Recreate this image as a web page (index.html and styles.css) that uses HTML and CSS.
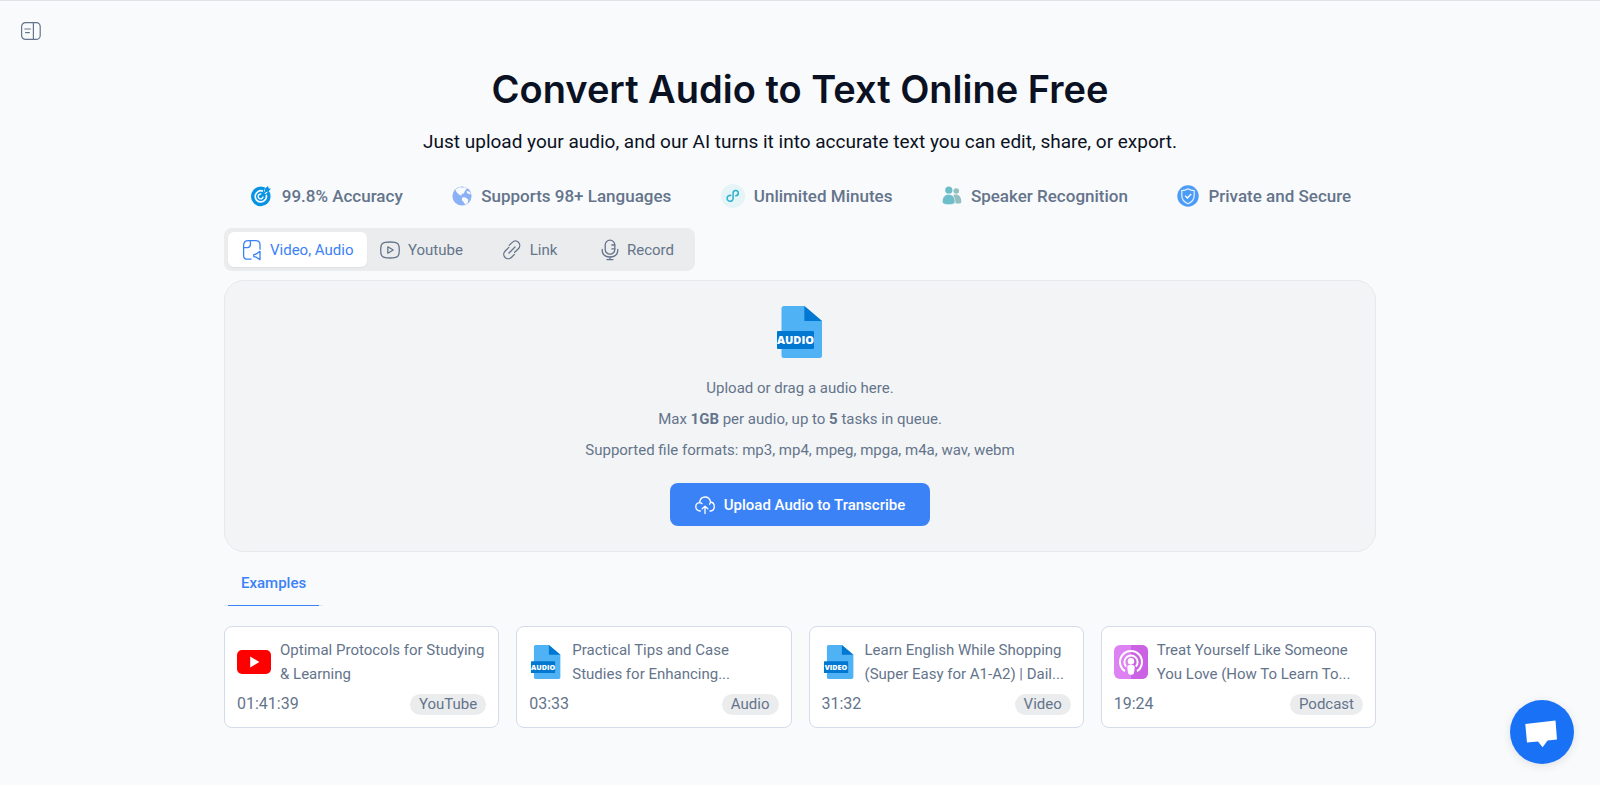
FILE: index.html
```html
<!DOCTYPE html>
<html lang="en">
<head>
  <meta charset="utf-8">
  <meta name="viewport" content="width=device-width, initial-scale=1">
  <title>Convert Audio to Text Online Free</title>
  <link rel="stylesheet" href="styles.css">
</head>
<body>
  <header class="topbar">
    <button class="sidebar-btn" aria-label="Open sidebar">
      <svg width="22" height="22" viewBox="0 0 22 22" fill="none" stroke="currentColor" stroke-width="1.2" stroke-linecap="round">
        <rect x="1.6" y="2.6" width="18.6" height="16.8" rx="4"/>
        <path d="M13.4 2.6v16.8M4.8 9h5.6M5.6 12.6h3.8"/>
      </svg>
    </button>
  </header>

  <main class="container">
    <h1 class="title">Convert Audio to Text Online Free</h1>
    <p class="subtitle">Just upload your audio, and our AI turns it into accurate text you can edit, share, or export.</p>

    <ul class="features">
      <li class="feature">
        <svg width="24" height="24" viewBox="0 0 24 24" fill="none">
          <circle cx="11.8" cy="12.4" r="9.8" fill="#0693e3"/>
          <path d="M14 7.2a5.6 5.6 0 1 0 3.2 3.6" stroke="#f9fafc" stroke-width="1.7"/>
          <path d="M12.4 10.2a2.4 2.4 0 1 0 1.6 2.2" stroke="#f9fafc" stroke-width="1.4"/>
          <path d="M14.6 9.6l1.2-5.4L19.4 1l2.4 4-5 5z" fill="#f9fafc"/>
          <path d="M15.8 8l.2-3.4 3-2.6.6 2.2 2.3.6-2.6 3z" fill="#0693e3"/>
          <path d="M11.9 12.4l5.6-5.8" stroke="#0693e3" stroke-width="1.4"/>
        </svg>
        <span>99.8% Accuracy</span>
      </li>
      <li class="feature">
        <svg width="20" height="20" viewBox="0 0 20 20">
          <circle cx="10" cy="10" r="9.6" fill="#8ab0f5"/>
          <path d="M7.4 1.2l3 .2 3-.1 1.6 1.1-2 2.4-1.2 2.6-2.4.7.4 1.6-2.2-.8L4.8 6.6 3.2 3.8z" fill="#f9fafc"/>
          <path d="M14.8 4.8l3 1.2 1 2.2-2.4-.2-1.6-1.4z" fill="#f9fafc"/>
          <path d="M10.2 11.2l3.4.4 2.8 2.2-.8 3.2-2.4 1.7-1.4-2.4-1.9-2.1z" fill="#f9fafc"/>
        </svg>
        <span>Supports 98+ Languages</span>
      </li>
      <li class="feature">
        <svg width="24" height="24" viewBox="0 0 24 24" fill="none">
          <circle cx="12" cy="12" r="12" fill="#e4f4f7"/>
          <path d="M9.8 11.4a3 3 0 1 0 2.3 3V9a2.6 2.6 0 1 1 2.6 2.7" stroke="#2bb1cd" stroke-width="1.5" stroke-linecap="round"/>
        </svg>
        <span>Unlimited Minutes</span>
      </li>
      <li class="feature">
        <svg width="20" height="20" viewBox="0 0 20 20">
          <circle cx="14.2" cy="5" r="2.8" fill="#93bfbf"/>
          <path d="M11.5 8.8c4.8-1 7.8 1.6 7.8 7 0 1-.6 1.6-1.6 1.6h-4z" fill="#93bfbf"/>
          <circle cx="6.8" cy="4.2" r="3.6" fill="#6dbdca"/>
          <path d="M.4 16c0-5 2.2-7.6 6.2-7.6s6.4 2.6 6.4 7.6c0 1.6-2.6 2.6-6.4 2.6S.4 17.6.4 16z" fill="#6dbdca" stroke="#f9fafc" stroke-width=".5"/>
        </svg>
        <span>Speaker Recognition</span>
      </li>
      <li class="feature">
        <svg width="22" height="22" viewBox="0 0 22 22" fill="none">
          <circle cx="11" cy="11" r="10.7" fill="#4b9bf7"/>
          <path d="M11 3.8c2 1.3 4 1.8 6.2 1.8v4.8c0 4-2.4 6.6-6.2 8.4-3.8-1.8-6.2-4.4-6.2-8.4V5.6c2.2 0 4.2-.5 6.2-1.8z" stroke="#e8f2fe" stroke-width="1.2"/>
          <path d="M8.2 10.8l2.2 2.2 3.800-4" stroke="#fff" stroke-width="1.3"/>
        </svg>
        <span>Private and Secure</span>
      </li>
    </ul>

    <div class="tabs">
      <button class="tab tab-active">
        <svg width="20" height="22" viewBox="0 0 20 22" fill="none" stroke="currentColor" stroke-width="1.3" stroke-linecap="round" stroke-linejoin="round">
          <path d="M9 20.200H5.400C3 20.200 1.600 18.800 1.600 16.400V6.400C1.600 3.400 3.400 1.600 6.400 1.600h7.400c3 0 4.200 1.400 4.200 4.200v4.400"/>
          <path d="M1.600 8.600h3.800c2 0 3-1 3-3v-4"/>
          <path d="M11.800 15.600l2.400-.6 3.800-2.600v8.200l-3.800-2.400-2.400-.6z"/>
        </svg>
        Video, Audio
      </button>
      <button class="tab">
        <svg width="20" height="20" viewBox="0 0 20 20" fill="none" stroke="currentColor" stroke-width="1.3" stroke-linejoin="round">
          <path d="M10 2c7.600 0 9.300 1.200 9.300 8s-1.700 8-9.300 8S.7 16.800.7 10 2.400 2 10 2z"/>
          <path d="M7.800 6.800l5.400 3.200-5.400 3.200z"/>
        </svg>
        Youtube
      </button>
      <button class="tab">
        <svg width="20" height="20" viewBox="0 0 20 20" fill="none" stroke="currentColor" stroke-width="1.3" stroke-linecap="round">
          <path d="M7.200 5.400l2.800-2.800c1.900-1.900 4.600-2 6.400-.4 1.800 1.800 1.800 4.600-.1 6.500l-3.600 3.600"/>
          <path d="M12.400 14.400l-2.800 2.800c-1.900 1.900-4.700 2-6.500.3-1.800-1.800-1.800-4.600.1-6.500l3.600-3.600M7 13l6-6"/>
        </svg>
        Link
      </button>
      <button class="tab">
        <svg width="18" height="22" viewBox="0 0 18 22" fill="none" stroke="currentColor" stroke-width="1.3" stroke-linecap="round">
          <rect x="4.2" y="1.2" width="9.6" height="14" rx="4.8"/>
          <path d="M1.200 10.400c0 5 3 7.600 7.800 7.600s7.800-2.600 7.800-7.600M9 18v2.600M6 20.600h6M10.800 6h3M10.800 9.800h3"/>
        </svg>
        Record
      </button>
    </div>

    <section class="dropzone">
      <svg class="file-icon" width="52" height="52" viewBox="0 0 52 52">
        <path d="M10 0h20.400L48 15v34.500a2.500 2.500 0 0 1-2.500 2.500H10a2.500 2.500 0 0 1-2.500-2.500V2.500A2.500 2.500 0 0 1 10 0z" fill="#4fb2f5"/>
        <path d="M30.400 0L48 15H30.400z" fill="#0077d0"/>
        <rect x="3" y="25" width="37" height="18" rx="1" fill="#0077d0"/>
        <text x="21.5" y="38" class="file-label">AUDIO</text>
      </svg>
      <p class="drop-text">Upload or drag a audio here.</p>
      <p class="drop-text">Max <strong>1GB</strong> per audio, up to <strong>5</strong> tasks in queue.</p>
      <p class="drop-text">Supported file formats: mp3, mp4, mpeg, mpga, m4a, wav, webm</p>
      <button class="upload-btn">
        <svg width="20" height="20" viewBox="0 0 20 20" fill="none" stroke="currentColor" stroke-width="1.3" stroke-linecap="round" stroke-linejoin="round">
          <path d="M5.400 16C2.600 16 .8 14.200.8 11.800c0-2.200 1.500-3.900 3.700-4.100C5 4.200 7 2 10 2s5 2 5.500 5c2.200.3 3.800 2.200 3.800 4.600 0 2.600-1.700 4.400-4.300 4.400"/>
          <path d="M4.500 7.700c1 0 1.900.3 2.500 1M15.500 7c-.1.900-.4 1.600-.9 2.200M10 18.600v-7.400M7.200 13.800l2.800-2.600 2.800 2.600"/>
        </svg>
        Upload Audio to Transcribe
      </button>
    </section>

    <div class="example-tabs">
      <button class="example-tab">Examples</button>
    </div>

    <div class="cards">
      <a class="card" href="#">
        <div class="card-top">
          <svg width="34" height="34" viewBox="0 0 34 34">
            <rect x="0" y="5" width="34" height="24" rx="5" fill="#f00"/>
            <path d="M13.200 11.600L22.400 17l-9.200 5.400z" fill="#fff"/>
          </svg>
          <p class="card-title">Optimal Protocols for Studying &amp; Learning</p>
        </div>
        <div class="card-bottom">
          <span class="time">01:41:39</span>
          <span class="pill">YouTube</span>
        </div>
      </a>
      <a class="card" href="#">
        <div class="card-top">
          <svg width="34" height="34" viewBox="0 0 52 52">
            <path d="M10 0h20.400L48 15v34.500a2.500 2.500 0 0 1-2.500 2.500H10a2.500 2.500 0 0 1-2.500-2.500V2.500A2.500 2.500 0 0 1 10 0z" fill="#4fb2f5"/>
            <path d="M30.400 0L48 15H30.400z" fill="#0077d0"/>
            <rect x="3" y="25" width="37" height="18" rx="1" fill="#0077d0"/>
            <text x="21.5" y="38" class="file-label">AUDIO</text>
          </svg>
          <p class="card-title">Practical Tips and Case Studies for Enhancing...</p>
        </div>
        <div class="card-bottom">
          <span class="time">03:33</span>
          <span class="pill">Audio</span>
        </div>
      </a>
      <a class="card" href="#">
        <div class="card-top">
          <svg width="34" height="34" viewBox="0 0 52 52">
            <path d="M10 0h20.400L48 15v34.500a2.500 2.500 0 0 1-2.500 2.500H10a2.500 2.500 0 0 1-2.500-2.500V2.500A2.500 2.500 0 0 1 10 0z" fill="#4fb2f5"/>
            <path d="M30.400 0L48 15H30.400z" fill="#0077d0"/>
            <rect x="3" y="25" width="37" height="18" rx="1" fill="#0077d0"/>
            <text x="21.5" y="38" class="file-label">VIDEO</text>
          </svg>
          <p class="card-title">Learn English While Shopping (Super Easy for A1-A2) | Dail...</p>
        </div>
        <div class="card-bottom">
          <span class="time">31:32</span>
          <span class="pill">Video</span>
        </div>
      </a>
      <a class="card" href="#">
        <div class="card-top">
          <svg width="34" height="34" viewBox="0 0 34 34" fill="none">
            <rect width="34" height="34" rx="6" fill="#dc82f2"/>
            <path d="M17 0h11a6 6 0 0 1 6 6v22a6 6 0 0 1-6 6H17z" fill="#cb62e4"/>
            <path d="M11 26.200a11 11 0 1 1 12 0" stroke="#fff" stroke-width="2"/>
            <path d="M12.200 21.600a6.600 6.600 0 1 1 9.600 0" stroke="#fff" stroke-width="2"/>
            <circle cx="17" cy="16.2" r="3.2" fill="#fff"/>
            <path d="M17 19.800c2.600 0 4 .9 3.700 3l-.7 5c-.3 1.600-1.400 2-3 2s-2.700-.4-3-2l-.7-5c-.3-2.100 1.100-3 3.700-3z" fill="#fff"/>
          </svg>
          <p class="card-title">Treat Yourself Like Someone You Love (How To Learn To...</p>
        </div>
        <div class="card-bottom">
          <span class="time">19:24</span>
          <span class="pill">Podcast</span>
        </div>
      </a>
    </div>
  </main>

  <button class="chat-btn" aria-label="Open chat">
    <svg width="64" height="64" viewBox="0 0 64 64">
      <path d="M15.300 24l30.200-3.600 1.500 19-9.400 1-5 6.800-4.600-5.600-11 1z" fill="#fff"/>
    </svg>
  </button>
</body>
</html>
```
FILE: styles.css
```css
*{
  box-sizing: border-box;
}

body{
  margin: 0;
  min-height: 100vh;
  background-color: #f9fafc;
  border-top: 1px solid #e0e2e6;
  color: #64748b;
  font-family: Roboto, sans-serif;
  font-size: 15px;
  line-height: 24px;
}

button{
  font: inherit;
  color: inherit;
  border: none;
  background: none;
  padding: 0;
  cursor: pointer;
}

svg{
  display: block;
  flex-shrink: 0;
}

.topbar{
  display: flex;
  padding: 19px 20px;
}

.container{
  width: 72%;
  margin: 0 auto;
}

.title,
.subtitle{
  color: #0a1122;
  text-align: center;
  margin: 0;
}

.title{
  font-family: Inter, sans-serif;
  font-size: 38px;
  font-weight: 600;
  line-height: 56px;
}

.subtitle{
  font-size: 19px;
  line-height: 28px;
  margin-top: 11px;
}

.features{
  display: flex;
  justify-content: space-around;
  list-style: none;
  margin: 28px 0 20px;
  padding: 0;
}

.feature{
  display: flex;
  align-items: center;
  gap: 9px;
  font-size: 17px;
  font-weight: 500;
}

.tabs{
  display: flex;
  width: fit-content;
  padding: 4px;
  border-radius: 8px;
  background-color: #ebeced;
}

.tab{
  display: flex;
  align-items: center;
  justify-content: center;
  gap: 8px;
  min-width: 108px;
  height: 35px;
  padding: 0 12px;
  border-radius: 6px;
}

.tab-active{
  padding: 0 14px;
  color: #3b82f6;
  background-color: white;
  box-shadow: 0 1px 2px rgba(0, 0, 0, 0.06);
}

.dropzone{
  display: flex;
  flex-direction: column;
  align-items: center;
  margin-top: 9px;
  padding: 25px 16px;
  border: 1px solid #e6e8eb;
  border-radius: 20px;
  background-color: #f3f4f6;
}

.file-icon{
  margin-bottom: 15px;
}

.file-label{
  fill: white;
  font-family: "Open Sans", sans-serif;
  font-size: 11px;
  font-weight: 800;
  text-anchor: middle;
}

.drop-text{
  margin: 0;
  line-height: 31px;
}

.upload-btn{
  display: flex;
  align-items: center;
  gap: 9px;
  height: 43px;
  margin-top: 17px;
  padding: 0 25px;
  border-radius: 8px;
  color: white;
  background-color: #3b82f6;
  font-weight: 500;
}

.example-tabs{
  display: flex;
  width: fit-content;
  margin-top: 8px;
  padding: 0 4px;
  border-bottom: 1px solid #e2e8f0;
}

.example-tab{
  height: 46px;
  margin-bottom: -1px;
  padding: 0 13px;
  color: #3b82f6;
  font-weight: 500;
  border-bottom: 1px solid #3b82f6;
}

.cards{
  display: grid;
  grid-template-columns: repeat(4, 1fr);
  gap: 17px;
  margin-top: 20px;
}

.card{
  padding: 11px 12px;
  border: 1px solid #d3dce8;
  border-radius: 8px;
  color: inherit;
  background-color: white;
  text-decoration: none;
}

.card-top{
  display: flex;
  align-items: center;
  gap: 9px;
}

.card-title{
  margin: 0;
}

.card-bottom{
  display: flex;
  align-items: center;
  justify-content: space-between;
  margin-top: 6px;
}

.time{
  font-size: 16px;
}

.pill{
  padding: 0 9px;
  border-radius: 11px;
  background-color: #ebeced;
  line-height: 21px;
}

.chat-btn{
  position: fixed;
  right: 26px;
  bottom: 21px;
  width: 64px;
  height: 64px;
  border-radius: 50%;
  background-color: #1972f5;
  box-shadow: 0 2px 10px rgba(0, 0, 0, 0.1);
}
```
